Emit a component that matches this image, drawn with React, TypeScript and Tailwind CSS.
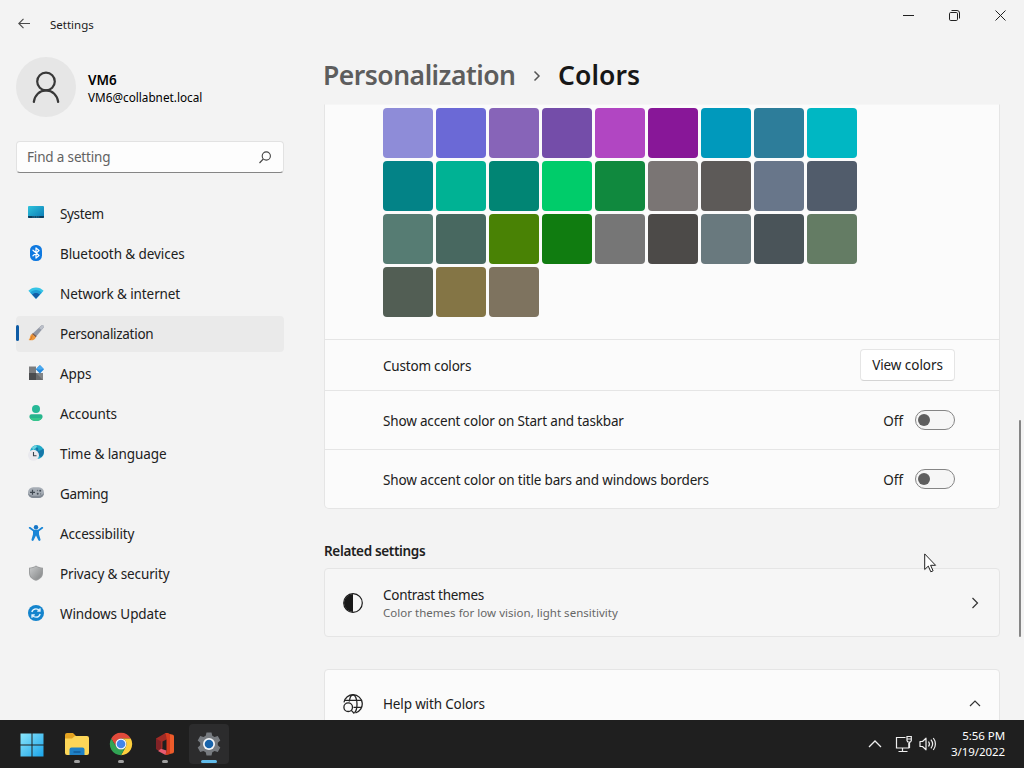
import type { ReactNode } from "react";

const swatches = [
  "#8e8cd8", "#6b69d6", "#8764b8", "#744da9", "#b146c2", "#881798", "#0099bc", "#2d7d9a", "#00b7c3",
  "#038387", "#00b294", "#018574", "#00cc6a", "#10893e", "#7a7574", "#5d5a58", "#68768a", "#515c6b",
  "#567c73", "#486860", "#498205", "#107c10", "#767676", "#4c4a48", "#69797e", "#4a5459", "#647c64",
  "#525e54", "#847545", "#7e735f",
];

function SystemIcon() {
  return (
    <svg width="16" height="16" viewBox="0 0 16 16">
      <defs>
        <linearGradient id="sys" x1="0" y1="0" x2="1" y2="1">
          <stop offset="0" stopColor="#2fc4dc" />
          <stop offset="1" stopColor="#0a78b4" />
        </linearGradient>
      </defs>
      <rect x="0" y="1" width="16" height="12" rx="1" fill="url(#sys)" />
      <path d="M0 11h16v1a1 1 0 0 1-1 1H1a1 1 0 0 1-1-1z" fill="#0b3f60" />
      <path d="M4.5 12h7" stroke="#4bb4d8" strokeWidth=".7" strokeDasharray="1 .7" />
    </svg>
  );
}

function BluetoothIcon() {
  return (
    <svg width="16" height="16" viewBox="0 0 16 16">
      <rect x="2" y="0" width="12" height="16" rx="5.5" fill="#0f79e0" />
      <path d="M5 5.2l6 5.3-3 2.6V2.9l3 2.6-6 5.3" fill="none" stroke="#fff" strokeWidth="1.2" strokeLinejoin="round" strokeLinecap="round" />
    </svg>
  );
}

function NetworkIcon() {
  return (
    <svg width="16" height="16" viewBox="0 0 16 16">
      <path d="M.4 5.8C2.5 3.5 5 2.4 8 2.4s5.5 1.1 7.6 3.4L8 13.8z" fill="#35c4e6" />
      <path d="M2.2 7.7C3.8 6 5.700 5.100 8 5.100s4.200.9 5.800 2.600L8 13.800z" fill="#1f9ed6" />
      <path d="M4.1 9.6C5.2 8.5 6.4 8 8 8s2.800.5 3.900 1.600L8 13.800z" fill="#125ca5" />
    </svg>
  );
}

function BrushIcon() {
  return (
    <svg width="16" height="16" viewBox="0 0 16 16">
      <path d="M5 8.200L13.300.600c1.500-1 3.200.5 2.200 2.100L8.600 11z" fill="#9298a5" />
      <path d="M11 3l3.300-2.700c1.100-.5 1.800.4 1.500 1.200L13.700 5z" fill="#bcc0c9" />
      <path d="M5 8l3.700 3.100-1 1.500L3.700 9.200z" fill="#7b5a4c" />
      <path d="M4 8.900l3.800 3.300c-.6 2.500-3.100 3.700-7.300 2.900C2.500 13.700 1.500 10 4 8.900z" fill="#ef983c" />
      <path d="M4.500 10.500c-1 .8-.7 3.200-2.300 4.400" stroke="#d47522" fill="none" />
    </svg>
  );
}

function AppsIcon() {
  return (
    <svg width="16" height="16" viewBox="0 0 16 16">
      <path d="M1 1.500h7v6.500H1z" fill="#7c7d7f" />
      <path d="M1 8h7v7H1z" fill="#4b4c4e" />
      <path d="M8 8h7v7H8z" fill="#828486" />
      <path d="M8 8l7 7H8z" fill="#696b6d" />
      <rect x="8.900" y="1.200" width="6" height="6" rx=".8" transform="rotate(45 11.900 4.200)" fill="#2489df" />
      <path d="M12 .300l3.600 3.700-3.600.7-3.500-.700z" fill="#49aaf0" />
    </svg>
  );
}

function AccountIcon() {
  return (
    <svg width="16" height="16" viewBox="0 0 16 16">
      <circle cx="8" cy="4" r="4" fill="#27b897" />
      <path d="M3.500 9.300h9A2.100 2.100 0 0 1 14.600 11.400C14.600 14 11.800 16 8 16s-6.600-2-6.600-4.600a2.100 2.100 0 0 1 2.100-2.100z" fill="#27b48d" />
      <path d="M2 13c1.200 1.900 3.400 3 6 3s4.800-1.100 6-3z" fill="#37c78c" />
    </svg>
  );
}

function TimeIcon() {
  return (
    <svg width="16" height="16" viewBox="0 0 16 16">
      <circle cx="9" cy="7" r="7" fill="#20a9c7" />
      <path d="M7 1l3 2 .5 3 3-1 2-1.500c1 3 .3 6.500-2.500 8.700L10 10z" fill="#1677a8" />
      <path d="M4 2.200L8 .1l1 2-4 3z" fill="#6bd3df" />
      <circle cx="5.500" cy="10.300" r="5.500" fill="#e9e9ee" />
      <path d="M5.500 7v3.800h3" fill="none" stroke="#39434e" strokeWidth="1.100" />
    </svg>
  );
}

function GameIcon() {
  return (
    <svg width="16" height="16" viewBox="0 0 16 16">
      <rect x="0" y="2.300" width="16" height="10.700" rx="5.200" fill="#a6adb5" />
      <path d="M0 8a5 5 0 0 0 5 5h6a5 5 0 0 0 5-5c-1.700 2-3.500 2.700-5 2.700H5C3 10.700 1.500 10 0 8z" fill="#818993" />
      <path d="M4.500 4.800v5M2 7.300h5" stroke="#3f4851" strokeWidth="1.200" />
      <circle cx="12.200" cy="5.700" r="1" fill="#444d57" />
      <circle cx="9.700" cy="8.800" r="1" fill="#444d57" />
      <circle cx="9.500" cy="5.500" r=".7" fill="#69717a" />
      <circle cx="12.600" cy="8.900" r=".7" fill="#69717a" />
    </svg>
  );
}

function AccessIcon() {
  return (
    <svg width="16" height="16" viewBox="0 0 16 16">
      <circle cx="8" cy="2.200" r="2.200" fill="#1676c7" />
      <path d="M2.300 2.100L6 4.700h4l3.700-2.600c1.200-.7 2.100.8 1.100 1.500L11 6.300v3l1.500 5.200c.3 1.400-1.600 2-2.100.7L8 10.500 5.600 15.200c-.5 1.300-2.400.7-2.100-.7L5 9.300v-3L1.200 3.600c-1-.7-.1-2.200 1.100-1.500z" fill="#1986d7" />
    </svg>
  );
}

function ShieldIcon() {
  return (
    <svg width="16" height="16" viewBox="0 0 16 16">
      <defs>
        <linearGradient id="shield" x1="0" y1="0" x2="1" y2="1">
          <stop offset="0" stopColor="#c8cacb" />
          <stop offset="1" stopColor="#828485" />
        </linearGradient>
      </defs>
      <path d="M8 .500c2.100 1.400 4.300 2.100 7 2.200v5.200c0 3.600-2.500 6.200-7 7.800C3.500 14.100 1 11.500 1 7.900V2.700C3.700 2.600 5.900 1.900 8 .5z" fill="#9b9d9e" />
      <path d="M8 1.500c1.800 1.200 3.700 1.900 6 2.100v4.300c0 3.100-2.100 5.300-6 6.800-3.900-1.500-6-3.700-6-6.800V3.600c2.300-.2 4.200-.9 6-2.100z" fill="url(#shield)" />
    </svg>
  );
}

function UpdateIcon() {
  return (
    <svg width="16" height="16" viewBox="0 0 16 16">
      <circle cx="8" cy="8" r="8" fill="#1484cd" />
      <path d="M3.800 7C4.400 5 6 3.800 8 3.800c1.500 0 2.700.6 3.600 1.800M12 3.300v2.800H9.200M12.200 9c-.6 2-2.200 3.200-4.200 3.200-1.500 0-2.700-.6-3.600-1.800M4 12.700V9.900h2.800" fill="none" stroke="#e6f5ff" strokeWidth="1.300" />
    </svg>
  );
}

const nav: { label: string; icon: ReactNode; tracking: string }[] = [
  { label: "System", icon: <SystemIcon />, tracking: "tracking-[-0.35px]" },
  { label: "Bluetooth & devices", icon: <BluetoothIcon />, tracking: "tracking-[-0.08px]" },
  { label: "Network & internet", icon: <NetworkIcon />, tracking: "tracking-[-0.1px]" },
  { label: "Personalization", icon: <BrushIcon />, tracking: "tracking-[-0.29px]" },
  { label: "Apps", icon: <AppsIcon />, tracking: "tracking-[-0.1px]" },
  { label: "Accounts", icon: <AccountIcon />, tracking: "tracking-[-0.12px]" },
  { label: "Time & language", icon: <TimeIcon />, tracking: "tracking-[-0.07px]" },
  { label: "Gaming", icon: <GameIcon />, tracking: "tracking-[-0.3px]" },
  { label: "Accessibility", icon: <AccessIcon />, tracking: "tracking-[-0.15px]" },
  { label: "Privacy & security", icon: <ShieldIcon />, tracking: "tracking-[-0.12px]" },
  { label: "Windows Update", icon: <UpdateIcon />, tracking: "tracking-[-0.1px]" },
];

function Sidebar() {
  return (
    <aside className="flex w-[268px] shrink-0 flex-col">
      <div className="mt-[9px] flex h-[60px] translate-y-px items-center gap-3">
        <div className="flex size-[60px] -translate-y-px items-center justify-center rounded-full bg-[#e6e6e6]">
          <svg width="30" height="34" viewBox="0 0 30 34" fill="none" stroke="#383838" strokeWidth="2.200" strokeLinecap="round">
            <circle cx="15" cy="11.500" r="8.800" />
            <path d="M2.800 32c.8-6.600 5.700-11.600 12.200-11.600S26.400 25.400 27.200 32" />
          </svg>
        </div>
        <div className="flex flex-col text-black">
          <div className="h-[18px] text-[13.500px] leading-[18px] font-semibold">VM6</div>
          <div className="h-4 text-[11.750px] leading-4">VM6@collabnet.local</div>
        </div>
      </div>
      <div className="mt-6 flex h-8 items-center justify-between rounded-[4px] border border-[#e2e2e2] border-b-[#858585] bg-[#fdfdfd] pr-[11px] pl-[10px] text-[13.500px] tracking-[-0.16px] text-[#626262]">
        <span>Find a setting</span>
        <svg width="13" height="13" viewBox="0 0 13 13" fill="none" stroke="#444" strokeWidth="1.100">
          <circle cx="7.300" cy="5" r="4.100" />
          <path d="M4.300 8L.500 12" />
        </svg>
      </div>
      <nav className="mt-[23px] flex flex-col gap-1">
        {nav.map((item) => {
          const active = item.label === "Personalization";
          return (
            <div key={item.label} className={active ? "flex h-9 items-center rounded-[4px] bg-[#eaeaea]" : "flex h-9 items-center"}>
              <div className={active ? "h-4 w-[3px] -translate-y-px rounded-full bg-[#0d5ba5]" : "h-4 w-[3px]"} />
              <div className="mr-4 ml-[9px] flex size-4 -translate-y-px">{item.icon}</div>
              <span className={`text-[13.500px] ${item.tracking}`}>{item.label}</span>
            </div>
          );
        })}
      </nav>
    </aside>
  );
}

function Toggle() {
  return (
    <div className="flex items-center gap-3">
      <span className="pt-[2px] text-[13.500px]">Off</span>
      <div className="flex h-5 w-10 items-center rounded-full border border-[#858585] bg-[#f6f6f6] pl-[2px]">
        <div className="size-3 rounded-full bg-[#5f5f5f]" />
      </div>
    </div>
  );
}

function Main() {
  return (
    <main className="ml-10 flex w-[676px] shrink-0 flex-col">
      <h1 className="flex h-[55px] shrink-0 items-center text-[26.500px] font-semibold">
        <span className="-ml-px w-[210px] tracking-[-0.5px] text-[#5d5d5d]">Personalization</span>
        <svg className="w-[8px]" height="12" viewBox="0 0 8 12" fill="none" stroke="#555" strokeWidth="1.500">
          <path d="M1.500 1.500L6 6l-4.500 4.500" />
        </svg>
        <span className="ml-[17px] tracking-[0.1px] text-[#171717]">Colors</span>
      </h1>
      <div className="mt-px flex flex-col rounded-b-[5px] border border-[#e5e5e5] border-t-[#f6f6f6] bg-[#fbfbfb]">
        <div className="flex h-[235px] flex-wrap content-start gap-[3px] border-b border-[#e5e5e5] pt-[3px] pr-[141px] pl-[58px]">
          {swatches.map((color) => (
            <div key={color} className="size-[50px] rounded-[4px]" style={{ backgroundColor: color }} />
          ))}
        </div>
        <div className="flex h-[51px] items-center justify-between border-b border-[#e5e5e5] pr-11 pl-[58px]">
          <span className="pt-[2px] text-[13.500px] tracking-[-0.2px]">Custom colors</span>
          <button className="h-8 w-[95px] rounded-[4px] border border-[#e5e5e5] border-b-[#d4d4d4] bg-white text-[13.500px] tracking-[-0.06px]">View colors</button>
        </div>
        <div className="flex h-[59px] items-center justify-between border-b border-[#e5e5e5] pr-11 pl-[58px]">
          <span className="pt-[2px] text-[13.500px] tracking-[-0.17px]">Show accent color on Start and taskbar</span>
          <Toggle />
        </div>
        <div className="flex h-[58px] items-center justify-between pr-11 pl-[58px]">
          <span className="pt-[2px] text-[13.500px] tracking-[-0.16px]">Show accent color on title bars and windows borders</span>
          <Toggle />
        </div>
      </div>
      <h2 className="mt-8 h-[27px] shrink-0 text-[13.500px] leading-[20px] font-semibold tracking-[-0.34px]">Related settings</h2>
      <div className="flex h-[69px] shrink-0 items-center rounded-[4px] border border-[#e5e5e5] bg-[#f6f6f6] pr-5 pl-[18px]">
        <svg width="20" height="20" viewBox="0 0 20 20">
          <circle cx="10" cy="10" r="9.300" fill="#f8f8f8" stroke="#1a1a1a" strokeWidth="1.200" />
          <path d="M10 1a9 9 0 0 0 0 18z" fill="#1a1a1a" />
        </svg>
        <div className="ml-5 flex grow flex-col pt-px">
          <span className="text-[13.500px] leading-[19px] tracking-[-0.28px]">Contrast themes</span>
          <span className="text-[11.500px] leading-4 tracking-[0.02px] text-[#666]">Color themes for low vision, light sensitivity</span>
        </div>
        <svg width="7" height="12" viewBox="0 0 7 12" fill="none" stroke="#333" strokeWidth="1.200">
          <path d="M.500 1l5 5-5 5" />
        </svg>
      </div>
      <div className="mt-8 flex h-[69px] shrink-0 items-center rounded-t-[4px] border border-[#e5e5e5] bg-[#fbfbfb] pr-[18px] pl-[18px]">
        <svg width="20" height="20" viewBox="0 0 20 20" fill="none" stroke="#242424" strokeWidth="1.300">
          <path d="M1 8.300a9.200 9.200 0 1 1 11.500 10.500" />
          <path d="M6.300 7.500C6.800 3.500 8.200.800 10 .800c2.200 0 4 4.100 4 9.200 0 4-1 7.500-2.600 8.800M1.800 6.400h16.400M10.500 13.400h7.800" />
          <circle cx="5.200" cy="13.200" r="4.300" />
          <path d="M8.300 16.400l3 3.100" />
        </svg>
        <span className="ml-5 grow pt-[2px] text-[13.500px] tracking-[-0.15px]">Help with Colors</span>
        <svg width="12" height="7" viewBox="0 0 12 7" fill="none" stroke="#333" strokeWidth="1.200">
          <path d="M1 6l5-5 5 5" />
        </svg>
      </div>
    </main>
  );
}

function Taskbar() {
  return (
    <footer className="flex h-12 shrink-0 items-center justify-between bg-[#1f1f1f] pr-[19px] pl-3 text-white">
      <div className="flex gap-1">
        <div className="flex size-10 items-center justify-center pt-px">
          <svg width="24" height="24" viewBox="0 0 24 24">
            <defs>
              <linearGradient id="win" x1="0" y1="0" x2="1" y2="1">
                <stop offset="0" stopColor="#8be5fa" />
                <stop offset="1" stopColor="#1aa4ea" />
              </linearGradient>
            </defs>
            <path d="M.500.500h11v11H.500zM12.500.500h11v11h-11zM.500 12.500h11v11H.500zM12.500 12.500h11v11h-11z" fill="url(#win)" />
          </svg>
        </div>
        <div className="ml-px flex h-10 w-10 flex-col items-center justify-end gap-1 pb-px">
          <svg width="26" height="24" viewBox="0 0 26 24">
            <path d="M1 3a2 2 0 0 1 2-2h6l3 3-2 4H1z" fill="#e4a321" />
            <path d="M1 6.500h7l3-2.500h12a2 2 0 0 1 2 2v15a2 2 0 0 1-2 2H3a2 2 0 0 1-2-2z" fill="#fcd658" />
            <path d="M5.500 23v-5.500a2 2 0 0 1 2-2h11a2 2 0 0 1 2 2V23z" fill="#1f81c6" />
            <path d="M9.500 20h7" stroke="#125b9a" strokeWidth="1.500" />
          </svg>
          <div className="h-[3px] w-[6px] rounded-full bg-[#a0a0a0]" />
        </div>
        <div className="flex h-10 w-10 flex-col items-center justify-end gap-1 pb-px">
          <svg width="24" height="24" viewBox="0 0 24 24">
            <path d="M2.240 6.500A11.200 11.200 0 0 1 21.760 6.500H12A5.500 5.500 0 0 0 7.200 14.750z" fill="#e14a3b" />
            <path d="M21.760 6.500A11.200 11.200 0 0 1 12 23.200l4.760-8.450A5.500 5.500 0 0 0 12 6.500z" fill="#fdcf3d" />
            <path d="M2.240 6.500l4.960 8.250a5.500 5.500 0 0 0 9.560 0L12 23.200A11.200 11.200 0 0 1 2.240 6.500z" fill="#31a454" />
            <circle cx="12" cy="12" r="5.500" fill="#f7f8fa" />
            <circle cx="12" cy="12" r="4.300" fill="#4285ea" />
          </svg>
          <div className="h-[3px] w-[6px] rounded-full bg-[#a0a0a0]" />
        </div>
        <div className="flex h-10 w-10 flex-col items-center justify-end gap-1 pb-px">
          <svg width="24" height="24" viewBox="0 0 24 24">
            <path d="M3 6.500l9.500-5.500h3v5.500l-6 3v7L5 18.500l-2-2z" fill="#a12b25" />
            <path d="M12.500 1l6.500 1.500a2 2 0 0 1 2 2v15a2 2 0 0 1-2 2L12.500 23l2.500-3V5z" fill="#ed5b2a" />
            <path d="M12.500 1l4.500 1v20l-4.500 1 1-4V6z" fill="#d63b1f" />
            <path d="M3 6.500l5 3v7.500l-4 1-1-1.500z" fill="#812226" />
            <path d="M5 19l3-2.200 5.500 1.700-1 4.500z" fill="#e95b70" />
          </svg>
          <div className="h-[3px] w-[6px] rounded-full bg-[#a0a0a0]" />
        </div>
        <div className="flex h-10 w-10 flex-col items-center justify-end gap-1 rounded-[4px] bg-[#2c2c2d] pb-px">
          <svg width="24" height="24" viewBox="0 0 24 24">
            <path d="M9.500.500h5l.8 3.300 2.200 1.300 3.300-1 2.500 4.300-2.500 2.300v2.600l2.500 2.300-2.500 4.300-3.300-1-2.200 1.300-.8 3.300h-5l-.8-3.300-2.200-1.300-3.300 1L.7 15.600l2.500-2.300v-2.600L.7 8.400l2.500-4.300 3.300 1 2.200-1.300z" fill="#777b80" />
            <circle cx="12" cy="12" r="6" fill="#f4f6f8" />
            <circle cx="12" cy="12" r="4.300" fill="#1763ab" />
          </svg>
          <div className="h-[3px] w-4 rounded-full bg-[#60bae9]" />
        </div>
      </div>
      <div className="flex items-center">
        <svg className="mr-[13px]" width="14" height="8" viewBox="0 0 14 8" fill="none" stroke="#eee" strokeWidth="1.300">
          <path d="M1 7l6-6 6 6" />
        </svg>
        <svg className="mr-[6px]" width="18" height="18" viewBox="0 0 18 18" fill="none" stroke="#eee" strokeWidth="1.200">
          <path d="M10.500 2.500H1.500v10.500h12.300V8M7.500 13v3.500M3.500 16.500h9M14.500 7v6" />
          <path d="M12 1.500h4.300v4l-.8 1.500h-2.700l-.8-1.500zM12 4h4.300" />
        </svg>
        <svg className="mr-[14px]" width="18" height="18" viewBox="0 0 18 18" fill="none" stroke="#eee" strokeWidth="1.200" strokeLinejoin="round">
          <path d="M1 6.500h2.500l3.500-3.300v11.600l-3.500-3.300H1z" />
          <path d="M9.500 6.500c1.100 1.500 1.100 3.500 0 5M11.900 4.700c2 2.500 2 6.100 0 8.600M14.300 3c2.800 3.500 2.800 8.500 0 12" />
        </svg>
        <div className="flex w-[54px] flex-col items-end text-[11.500px] leading-4 tracking-[-0.08px] whitespace-nowrap">
          <span>5:56 PM</span>
          <span>3/19/2022</span>
        </div>
      </div>
    </footer>
  );
}

export default function App() {
  return (
    <div className="relative flex h-[768px] w-[1024px] flex-col overflow-hidden bg-[#f3f3f3] font-['Noto_Sans',sans-serif] text-[#202020]">
      <header className="flex h-12 shrink-0 justify-between pr-[18px] pl-[18px]">
        <div className="flex items-center gap-5 pt-px text-[11.500px]">
          <svg className="-translate-y-px" width="12" height="11" viewBox="0 0 12 11" fill="none" stroke="#4a4a4a" strokeWidth="1.100">
            <path d="M12 5.500H.800M5.500.800L.800 5.500l4.700 4.700" />
          </svg>
          <span>Settings</span>
        </div>
        <div className="flex h-[31px] items-center gap-[35px]">
          <svg width="11" height="11" viewBox="0 0 11 11">
            <path d="M0 5.500h11" stroke="#202020" />
          </svg>
          <svg width="11" height="11" viewBox="0 0 11 11" fill="none" stroke="#202020">
            <rect x=".5" y="2.500" width="8" height="8" rx="1.200" />
            <path d="M2.500.500h5.500a2.500 2.500 0 0 1 2.500 2.500v5.500" />
          </svg>
          <svg width="11" height="11" viewBox="0 0 11 11">
            <path d="M.500.500l10 10m0-10l-10 10" stroke="#202020" />
          </svg>
        </div>
      </header>
      <div className="flex min-h-0 grow overflow-hidden pl-4">
        <Sidebar />
        <Main />
        <div className="mt-[372px] ml-[19px] h-[217px] w-[2px] rounded-full bg-[#858585]" />
      </div>
      <Taskbar />
      <svg className="absolute top-[553px] left-[924px]" width="13" height="20" viewBox="0 0 13 20">
        <path d="M.700.900v15.600l3.600-3.400 2.500 5.700 2.300-1-2.500-5.500h5z" fill="#fff" stroke="#222" />
      </svg>
    </div>
  );
}
